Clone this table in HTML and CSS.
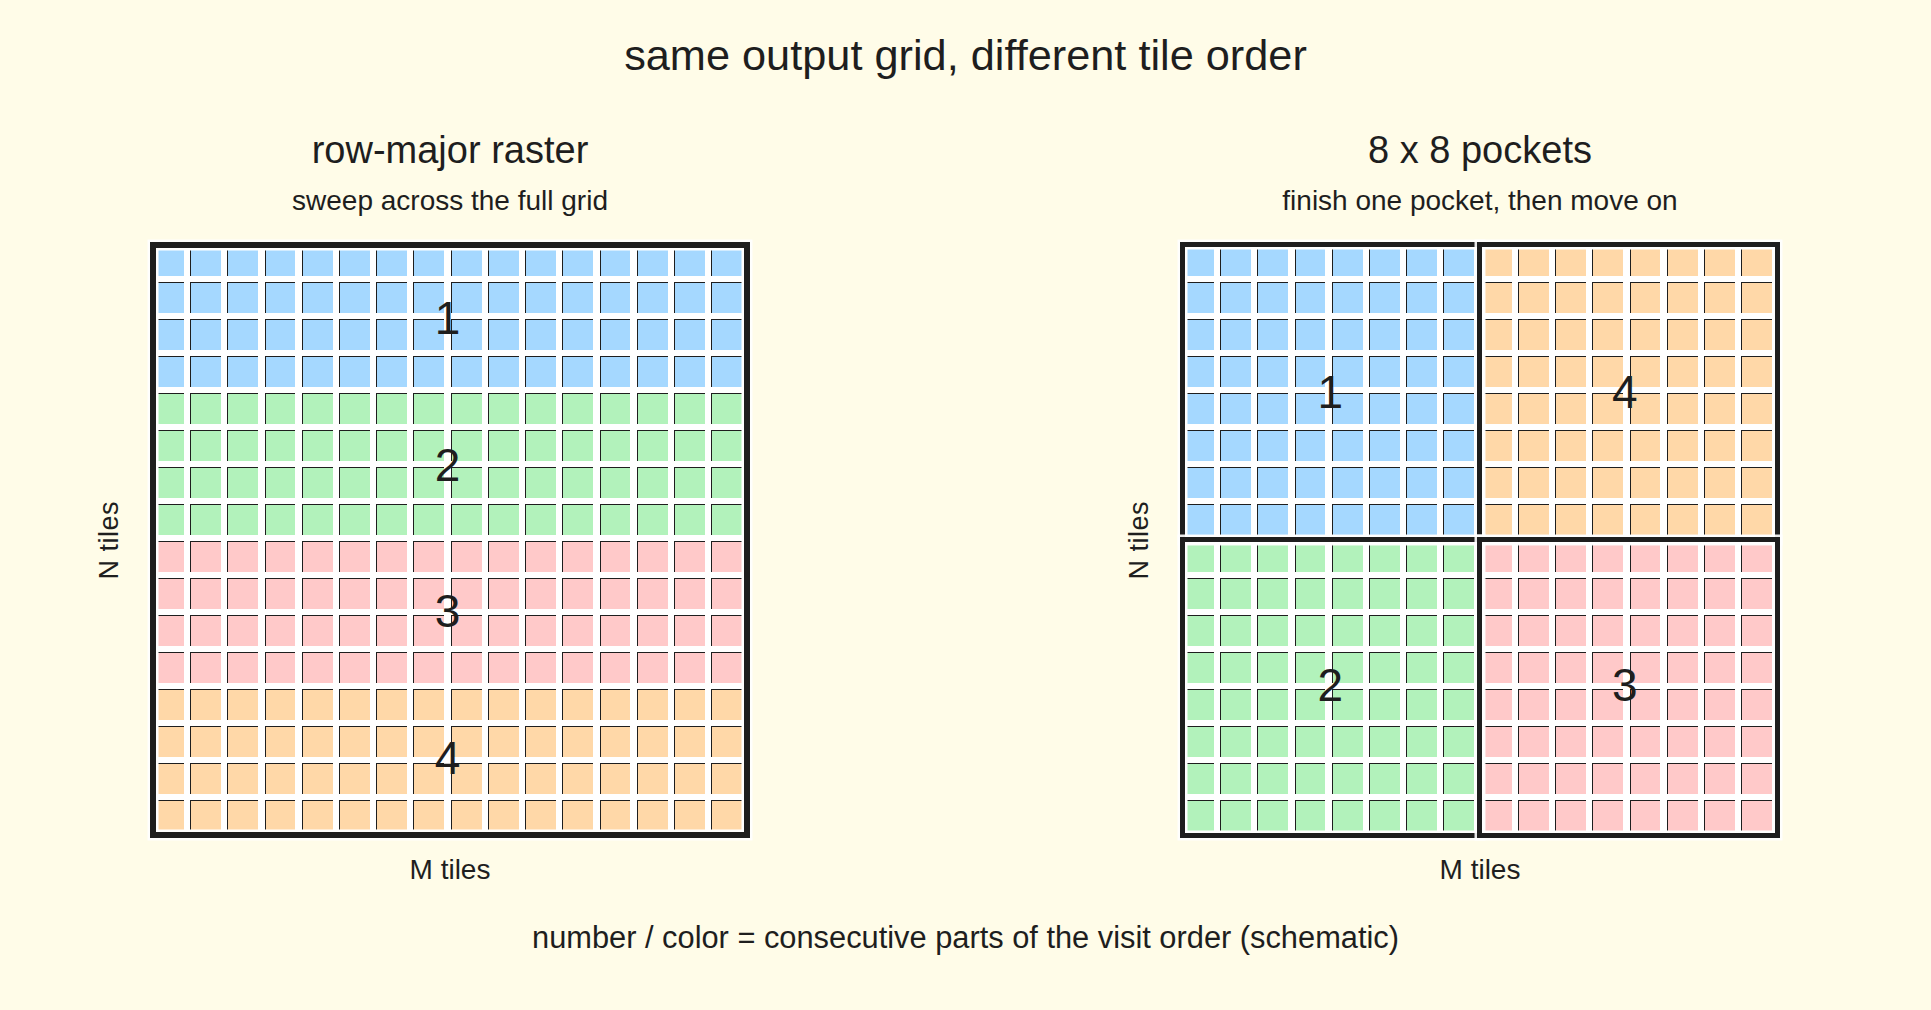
FILE: index.html
```html
<!DOCTYPE html>
<html lang="en">
<head>
<meta charset="utf-8">
<title>same output grid, different tile order</title>
<link rel="stylesheet" href="styles.css">
</head>
<body>
<div class="page">
  <h1 class="title">same output grid, different tile order</h1>
  <div class="panels">
    <section class="panel">
      <div class="ptitle">row-major raster</div>
      <div class="psub">sweep across the full grid</div>
      <div class="ylabel">N tiles</div>
      <div class="grid raster">
        <div class="cells">
<span></span><span></span><span></span><span></span><span></span><span></span><span></span><span></span><span></span><span></span><span></span><span></span><span></span><span></span><span></span><span></span>
<span></span><span></span><span></span><span></span><span></span><span></span><span></span><span></span><span></span><span></span><span></span><span></span><span></span><span></span><span></span><span></span>
<span></span><span></span><span></span><span></span><span></span><span></span><span></span><span></span><span></span><span></span><span></span><span></span><span></span><span></span><span></span><span></span>
<span></span><span></span><span></span><span></span><span></span><span></span><span></span><span></span><span></span><span></span><span></span><span></span><span></span><span></span><span></span><span></span>
<span></span><span></span><span></span><span></span><span></span><span></span><span></span><span></span><span></span><span></span><span></span><span></span><span></span><span></span><span></span><span></span>
<span></span><span></span><span></span><span></span><span></span><span></span><span></span><span></span><span></span><span></span><span></span><span></span><span></span><span></span><span></span><span></span>
<span></span><span></span><span></span><span></span><span></span><span></span><span></span><span></span><span></span><span></span><span></span><span></span><span></span><span></span><span></span><span></span>
<span></span><span></span><span></span><span></span><span></span><span></span><span></span><span></span><span></span><span></span><span></span><span></span><span></span><span></span><span></span><span></span>
<span></span><span></span><span></span><span></span><span></span><span></span><span></span><span></span><span></span><span></span><span></span><span></span><span></span><span></span><span></span><span></span>
<span></span><span></span><span></span><span></span><span></span><span></span><span></span><span></span><span></span><span></span><span></span><span></span><span></span><span></span><span></span><span></span>
<span></span><span></span><span></span><span></span><span></span><span></span><span></span><span></span><span></span><span></span><span></span><span></span><span></span><span></span><span></span><span></span>
<span></span><span></span><span></span><span></span><span></span><span></span><span></span><span></span><span></span><span></span><span></span><span></span><span></span><span></span><span></span><span></span>
<span></span><span></span><span></span><span></span><span></span><span></span><span></span><span></span><span></span><span></span><span></span><span></span><span></span><span></span><span></span><span></span>
<span></span><span></span><span></span><span></span><span></span><span></span><span></span><span></span><span></span><span></span><span></span><span></span><span></span><span></span><span></span><span></span>
<span></span><span></span><span></span><span></span><span></span><span></span><span></span><span></span><span></span><span></span><span></span><span></span><span></span><span></span><span></span><span></span>
<span></span><span></span><span></span><span></span><span></span><span></span><span></span><span></span><span></span><span></span><span></span><span></span><span></span><span></span><span></span><span></span>
        </div>
        <div class="frame full"></div>
        <div class="bands rows4">
          <div>1</div><div>2</div><div>3</div><div>4</div>
        </div>
      </div>
      <div class="xlabel">M tiles</div>
    </section>

    <section class="panel">
      <div class="ptitle">8 x 8 pockets</div>
      <div class="psub">finish one pocket, then move on</div>
      <div class="ylabel">N tiles</div>
      <div class="grid pockets">
        <div class="cells">
<span></span><span></span><span></span><span></span><span></span><span></span><span></span><span></span><span></span><span></span><span></span><span></span><span></span><span></span><span></span><span></span>
<span></span><span></span><span></span><span></span><span></span><span></span><span></span><span></span><span></span><span></span><span></span><span></span><span></span><span></span><span></span><span></span>
<span></span><span></span><span></span><span></span><span></span><span></span><span></span><span></span><span></span><span></span><span></span><span></span><span></span><span></span><span></span><span></span>
<span></span><span></span><span></span><span></span><span></span><span></span><span></span><span></span><span></span><span></span><span></span><span></span><span></span><span></span><span></span><span></span>
<span></span><span></span><span></span><span></span><span></span><span></span><span></span><span></span><span></span><span></span><span></span><span></span><span></span><span></span><span></span><span></span>
<span></span><span></span><span></span><span></span><span></span><span></span><span></span><span></span><span></span><span></span><span></span><span></span><span></span><span></span><span></span><span></span>
<span></span><span></span><span></span><span></span><span></span><span></span><span></span><span></span><span></span><span></span><span></span><span></span><span></span><span></span><span></span><span></span>
<span></span><span></span><span></span><span></span><span></span><span></span><span></span><span></span><span></span><span></span><span></span><span></span><span></span><span></span><span></span><span></span>
<span></span><span></span><span></span><span></span><span></span><span></span><span></span><span></span><span></span><span></span><span></span><span></span><span></span><span></span><span></span><span></span>
<span></span><span></span><span></span><span></span><span></span><span></span><span></span><span></span><span></span><span></span><span></span><span></span><span></span><span></span><span></span><span></span>
<span></span><span></span><span></span><span></span><span></span><span></span><span></span><span></span><span></span><span></span><span></span><span></span><span></span><span></span><span></span><span></span>
<span></span><span></span><span></span><span></span><span></span><span></span><span></span><span></span><span></span><span></span><span></span><span></span><span></span><span></span><span></span><span></span>
<span></span><span></span><span></span><span></span><span></span><span></span><span></span><span></span><span></span><span></span><span></span><span></span><span></span><span></span><span></span><span></span>
<span></span><span></span><span></span><span></span><span></span><span></span><span></span><span></span><span></span><span></span><span></span><span></span><span></span><span></span><span></span><span></span>
<span></span><span></span><span></span><span></span><span></span><span></span><span></span><span></span><span></span><span></span><span></span><span></span><span></span><span></span><span></span><span></span>
<span></span><span></span><span></span><span></span><span></span><span></span><span></span><span></span><span></span><span></span><span></span><span></span><span></span><span></span><span></span><span></span>
        </div>
        <div class="frame q q0"></div>
        <div class="frame q q1"></div>
        <div class="frame q q2"></div>
        <div class="frame q q3"></div>
        <div class="bands quads">
          <div>1</div><div>4</div><div>2</div><div>3</div>
        </div>
      </div>
      <div class="xlabel">M tiles</div>
    </section>
  </div>
  <p class="footer">number / color = consecutive parts of the visit order (schematic)</p>
</div>
</body>
</html>
```

FILE: styles.css
```css
html, body {
  margin: 0;
  padding: 0;
  background: #fffce8;
}

body {
  font-family: "Liberation Sans", Arial, sans-serif;
  color: #1e1e1e;
}

.page {
  width: 1931px;
  height: 1010px;
  padding-top: 34px;
  box-sizing: border-box;
}

.title {
  margin: 0;
  text-align: center;
  font-size: 43.3px;
  line-height: 43px;
  font-weight: normal;
}

.panels {
  display: flex;
  gap: 370px;
  padding-left: 90px;
  margin-top: 53.5px;
}

.panel {
  display: grid;
  grid-template-columns: 60px 600px;
}

.ptitle {
  grid-column: 2;
  text-align: center;
  font-size: 38px;
  line-height: 38px;
}

.psub {
  grid-column: 2;
  text-align: center;
  font-size: 28px;
  line-height: 28px;
  margin-top: 18.5px;
  margin-bottom: 27px;
}

.ylabel {
  grid-column: 1;
  grid-row: 3;
  align-self: center;
  justify-self: start;
  margin-left: 6px;
  writing-mode: vertical-rl;
  transform: rotate(180deg);
  font-size: 27px;
  line-height: 27px;
  letter-spacing: 0.5px;
}

.grid {
  grid-column: 2;
  grid-row: 3;
  position: relative;
  width: 600px;
  height: 596px;
  background: #ffffff;
}

.cells {
  display: grid;
  grid-template-columns: repeat(16, 1fr);
  grid-template-rows: repeat(16, 1fr);
  column-gap: 6.4px;
  row-gap: 5.7px;
  padding: 3px 8px 7px 3px;
  height: 100%;
  box-sizing: border-box;
}

.cells span {
  display: block;
  border-top: 1.5px solid #1e1e1e;
  border-left: 1.5px solid #1e1e1e;
  background: #a5d8ff;
}

/* row-major raster: four consecutive bands of 4 rows */
.raster .cells span:nth-child(n+65) { background: #b2f2bb; }
.raster .cells span:nth-child(n+129) { background: #ffc9c9; }
.raster .cells span:nth-child(n+193) { background: #ffd8a8; }

/* 8 x 8 pockets: quadrants */
.pockets .cells span:nth-child(16n+9),
.pockets .cells span:nth-child(16n+10),
.pockets .cells span:nth-child(16n+11),
.pockets .cells span:nth-child(16n+12),
.pockets .cells span:nth-child(16n+13),
.pockets .cells span:nth-child(16n+14),
.pockets .cells span:nth-child(16n+15),
.pockets .cells span:nth-child(16n+16) { background: #ffd8a8; }

.pockets .cells span:nth-child(n+129) { background: #b2f2bb; }

.pockets .cells span:nth-child(n+129):nth-child(16n+9),
.pockets .cells span:nth-child(n+129):nth-child(16n+10),
.pockets .cells span:nth-child(n+129):nth-child(16n+11),
.pockets .cells span:nth-child(n+129):nth-child(16n+12),
.pockets .cells span:nth-child(n+129):nth-child(16n+13),
.pockets .cells span:nth-child(n+129):nth-child(16n+14),
.pockets .cells span:nth-child(n+129):nth-child(16n+15),
.pockets .cells span:nth-child(n+129):nth-child(16n+16) { background: #ffc9c9; }

.frame {
  position: absolute;
  box-sizing: border-box;
  border: 6px solid #1e1e1e;
  box-shadow: inset 0 0 0 2.5px #ffffff, 0 0 0 2.5px rgba(255, 255, 255, 0.9);
  pointer-events: none;
}

.frame.full {
  inset: 0;
}

.frame.q {
  width: 302.5px;
  height: 300.5px;
  border-width: 5.5px;
}

.q0 { left: 0; top: 0; }
.q1 { left: 297px; top: 0; }
.q2 { left: 0; top: 295px; }
.q3 { left: 297px; top: 295px; }

.bands {
  position: absolute;
  inset: 3px 8px 7px 3px;
  display: grid;
  font-size: 46px;
  line-height: 46px;
}

.bands div {
  display: flex;
  align-items: center;
  justify-content: center;
}

.rows4 {
  grid-template-rows: repeat(4, 1fr);
}

.quads {
  grid-template-columns: 1fr 1fr;
  grid-template-rows: 1fr 1fr;
}

.xlabel {
  grid-column: 2;
  text-align: center;
  font-size: 28px;
  line-height: 28px;
  margin-top: 18px;
}

.footer {
  margin: 39px 0 0;
  text-align: center;
  font-size: 30.8px;
  line-height: 30px;
}
```
